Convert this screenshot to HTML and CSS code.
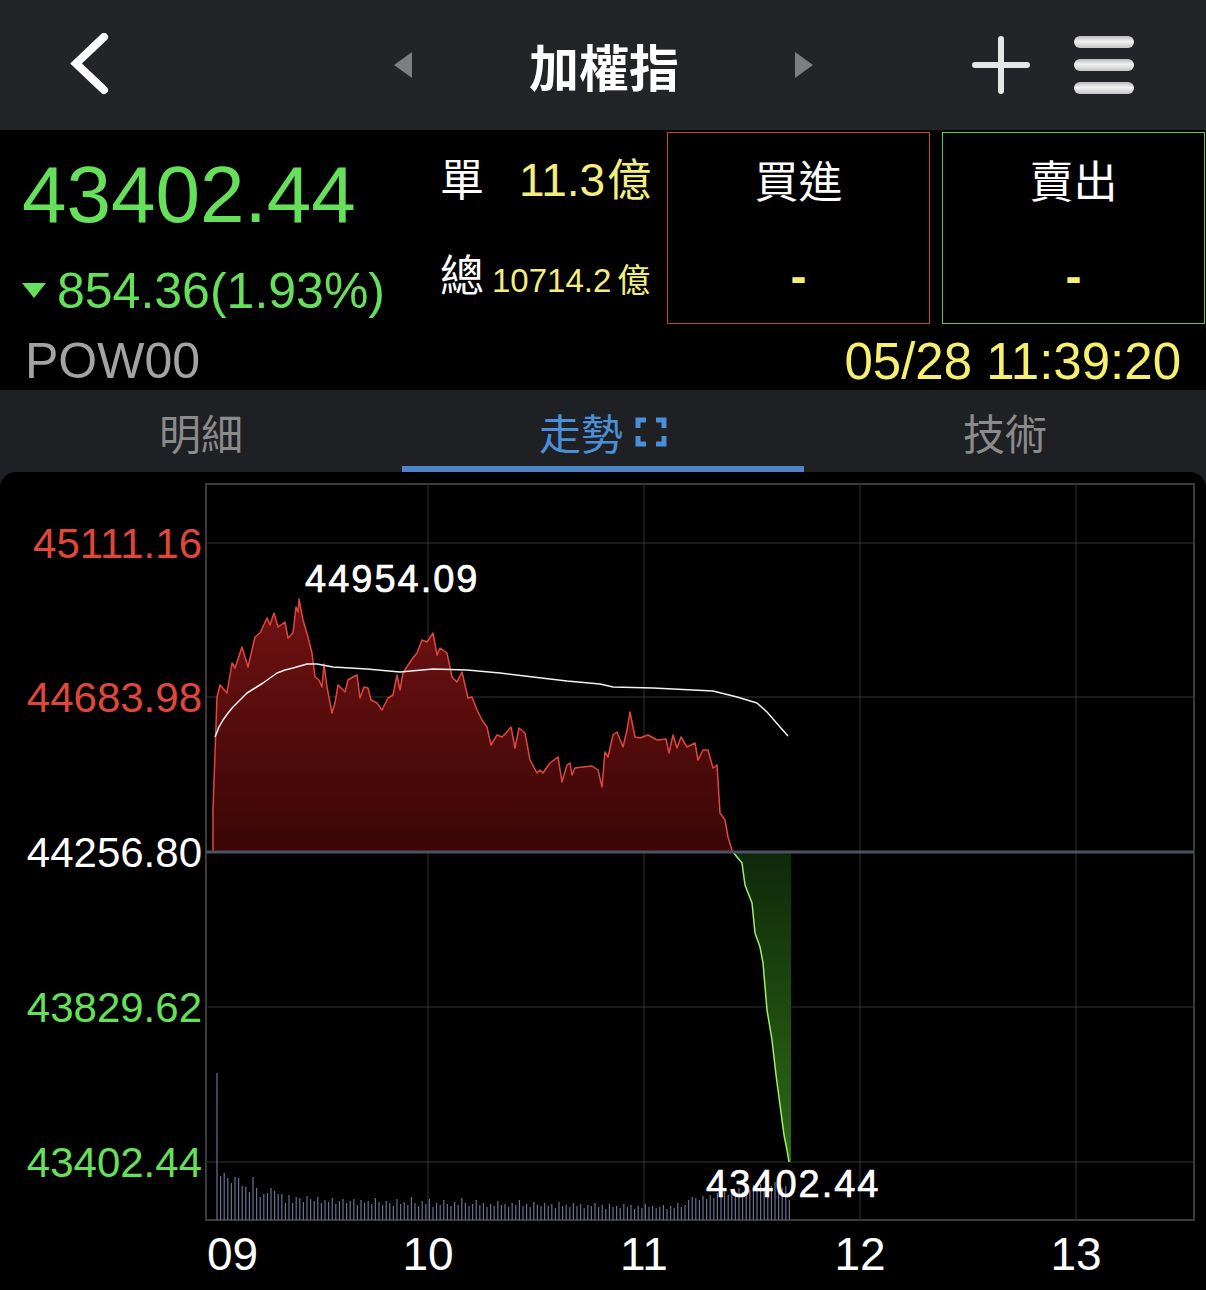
FILE: index.html
```html
<!DOCTYPE html>
<html lang="zh-Hant">
<head>
<meta charset="utf-8">
<title>加權指</title>
<link rel="stylesheet" href="styles.css">
</head>
<body>
<div class="app">
  <header class="nav">
    <svg class="nav-back" width="44" height="64" viewBox="0 0 44 64"><path d="M38 4 L10 30.5 L38 57" fill="none" stroke="#fff" stroke-width="8" stroke-linecap="round" stroke-linejoin="miter"/></svg>
    <span class="tri tri-left"></span>
    <h1 class="nav-title">加權指</h1>
    <span class="tri tri-right"></span>
    <svg class="nav-plus" width="58" height="58" viewBox="0 0 58 58"><path d="M29 3 V55 M3 29 H55" stroke="#e6e6e6" stroke-width="6" stroke-linecap="round"/></svg>
    <div class="nav-menu"><span></span><span></span><span></span></div>
  </header>

  <section class="quote">
    <div class="quote-main">
      <div class="price-col">
        <div class="price">43402.44</div>
        <div class="change"><span class="down-tri"></span>854.36(1.93%)</div>
      </div>
      <div class="vol-col">
        <div class="vol-row"><span class="vl">單</span><span class="num">11.3</span><span class="unit">億</span></div>
        <div class="vol-row vol-row2"><span class="vl vl2">總</span><span class="num-sm">10714.2</span><span class="unit-sm">億</span></div>
      </div>
      <div class="box buy"><div class="box-label">買進</div><div class="dash">-</div></div>
      <div class="box sell"><div class="box-label">賣出</div><div class="dash">-</div></div>
    </div>
    <div class="quote-foot"><span class="code">POW00</span><span class="time">05/28 11:39:20</span></div>
  </section>

  <nav class="tabs">
    <div class="tab">明細</div>
    <div class="tab active">走勢<svg class="fs-icon" width="32" height="30" viewBox="0 0 32 30"><path d="M3 11 V3 H11 M21 3 H29 V11 M29 19 V27 H21 M11 27 H3 V19" fill="none" stroke="#4b8fd8" stroke-width="5"/></svg></div>
    <div class="tab">技術</div>
  </nav>

  <section class="chart">
    <svg class="chart-svg" width="1206" height="818" viewBox="0 472 1206 818">
      <defs>
        <linearGradient id="redFill" x1="0" y1="0" x2="0" y2="1">
          <stop offset="0" stop-color="#701212"/>
          <stop offset="1" stop-color="#3a0606"/>
        </linearGradient>
        <linearGradient id="greenFill" x1="0" y1="0" x2="0" y2="1">
          <stop offset="0" stop-color="#0e2809"/>
          <stop offset="1" stop-color="#2f6b17"/>
        </linearGradient>
      </defs>

      <rect class="frame" x="206" y="484" width="988" height="736"/>
      <path class="grid" d="M206 543 H1194 M206 697 H1194 M206 1007 H1194 M206 1162 H1194 M428 484 V1220 M644 484 V1220 M860 484 V1220 M1076 484 V1220"/>

      <g transform="translate(217 0) scale(3.6 1)">
        <path class="vol" d="M0 1073V1220M1 1176V1220M2 1173V1220M3 1178V1220M4 1183V1220M5 1177V1220M6 1178V1220M7 1186V1220M8 1187V1220M9 1192V1220M10 1177V1220M11 1188V1220M12 1197V1220M13 1194V1220M14 1193V1220M15 1188V1220M16 1191V1220M17 1194V1220M18 1194V1220M19 1203V1220M20 1195V1220M21 1203V1220M22 1197V1220M23 1198V1220M24 1202V1220M25 1196V1220M26 1199V1220M27 1201V1220M28 1197V1220M29 1203V1220M30 1200V1220M31 1202V1220M32 1198V1220M33 1204V1220M34 1201V1220M35 1199V1220M36 1203V1220M37 1201V1220M38 1199V1220M39 1205V1220M40 1200V1220M41 1203V1220M42 1201V1220M43 1204V1220M44 1198V1220M45 1202V1220M46 1205V1220M47 1201V1220M48 1203V1220M49 1206V1220M50 1199V1220M51 1204V1220M52 1202V1220M53 1205V1220M54 1197V1220M55 1203V1220M56 1206V1220M57 1201V1220M58 1204V1220M59 1199V1220M60 1207V1220M61 1203V1220M62 1205V1220M63 1200V1220M64 1204V1220M65 1206V1220M66 1202V1220M67 1205V1220M68 1198V1220M69 1203V1220M70 1206V1220M71 1204V1220M72 1200V1220M73 1205V1220M74 1203V1220M75 1207V1220M76 1204V1220M77 1206V1220M78 1201V1220M79 1205V1220M80 1204V1220M81 1207V1220M82 1203V1220M83 1205V1220M84 1200V1220M85 1206V1220M86 1204V1220M87 1207V1220M88 1202V1220M89 1205V1220M90 1206V1220M91 1203V1220M92 1206V1220M93 1204V1220M94 1208V1220M95 1202V1220M96 1206V1220M97 1205V1220M98 1207V1220M99 1203V1220M100 1206V1220M101 1204V1220M102 1208V1220M103 1205V1220M104 1206V1220M105 1203V1220M106 1207V1220M107 1205V1220M108 1209V1220M109 1204V1220M110 1207V1220M111 1206V1220M112 1208V1220M113 1204V1220M114 1207V1220M115 1205V1220M116 1209V1220M117 1206V1220M118 1208V1220M119 1204V1220M120 1207V1220M121 1206V1220M122 1208V1220M123 1207V1220M124 1205V1220M125 1209V1220M126 1206V1220M127 1208V1220M128 1203V1220M129 1207V1220M130 1205V1220M131 1200V1220M132 1197V1220M133 1198V1220M134 1200V1220M135 1196V1220M136 1199V1220M137 1195V1220M138 1198V1220M139 1193V1220M140 1196V1220M141 1192V1220M142 1195V1220M143 1190V1220M144 1194V1220M145 1188V1220M146 1192V1220M147 1186V1220M148 1190V1220M149 1185V1220M150 1188V1220M151 1184V1220M152 1187V1220M153 1183V1220M154 1186V1220M155 1182V1220M156 1185V1220M157 1188V1220M158 1186V1220M159 1200V1220"/>
      </g>

      <path class="red-area" d="M213 852 L213 810 217 697 220 685 227 693 232 663 235 668 242 647 248 667 255 637 260 633 267 618 270 625 274 613 278 627 285 622 288 638 293 633 296 607 298 612 299 599 303 620 308 637 312 653 315 677 319 680 322 687 324 664 327 687 332 713 335 703 338 685 345 692 348 680 353 677 357 675 360 698 364 687 368 688 371 700 377 703 382 710 388 698 393 695 397 675 400 690 403 673 408 665 413 658 417 653 422 640 427 642 433 633 437 655 440 648 447 653 452 677 457 682 462 672 468 698 472 697 477 710 482 720 487 727 491 745 497 735 502 737 506 733 511 727 515 748 519 728 525 733 530 760 537 773 540 770 543 773 550 763 558 757 562 782 567 765 570 763 572 775 575 768 583 767 592 766 598 770 602 787 605 752 608 757 613 735 617 732 623 747 627 730 630 712 635 737 640 738 648 735 657 740 666 739 669 753 673 735 677 748 681 737 687 747 695 743 698 760 703 750 708 750 713 768 717 765 720 813 725 820 728 837 732 850 733 852 Z"/>
      <path class="red-line" d="M213 852 L213 810 217 697 220 685 227 693 232 663 235 668 242 647 248 667 255 637 260 633 267 618 270 625 274 613 278 627 285 622 288 638 293 633 296 607 298 612 299 599 303 620 308 637 312 653 315 677 319 680 322 687 324 664 327 687 332 713 335 703 338 685 345 692 348 680 353 677 357 675 360 698 364 687 368 688 371 700 377 703 382 710 388 698 393 695 397 675 400 690 403 673 408 665 413 658 417 653 422 640 427 642 433 633 437 655 440 648 447 653 452 677 457 682 462 672 468 698 472 697 477 710 482 720 487 727 491 745 497 735 502 737 506 733 511 727 515 748 519 728 525 733 530 760 537 773 540 770 543 773 550 763 558 757 562 782 567 765 570 763 572 775 575 768 583 767 592 766 598 770 602 787 605 752 608 757 613 735 617 732 623 747 627 730 630 712 635 737 640 738 648 735 657 740 666 739 669 753 673 735 677 748 681 737 687 747 695 743 698 760 703 750 708 750 713 768 717 765 720 813 725 820 728 837 732 850 733 852"/>

      <path class="green-area" d="M733 852 L737 857 742 863 745 885 752 903 755 933 760 947 763 963 767 1010 772 1040 776 1075 780 1105 784 1135 787 1150 789 1162 791 1162 791 852 Z"/>
      <path class="green-line" d="M733 852 L737 857 742 863 745 885 752 903 755 933 760 947 763 963 767 1010 772 1040 776 1075 780 1105 784 1135 787 1150 789 1162"/>

      <path class="base" d="M206 852 H1194"/>

      <path class="avg" d="M215 737 L219 727 223 720 228 713 233 707 240 700 247 693 255 688 263 683 270 678 277 673 285 670 293 668 300 666 307 664 317 664 333 667 367 669 400 672 433 669 467 670 500 673 533 677 567 681 600 684 613 687 653 688 713 691 737 697 757 703 767 712 780 727 788 736"/>

      <text class="ylab up" x="202" y="558">45111.16</text>
      <text class="ylab up" x="202" y="712">44683.98</text>
      <text class="ylab flat" x="202" y="867">44256.80</text>
      <text class="ylab down" x="202" y="1022">43829.62</text>
      <text class="ylab down" x="202" y="1177">43402.44</text>

      <text class="mark" x="305" y="592">44954.09</text>
      <text class="mark" x="706" y="1197">43402.44</text>

      <text class="xlab" x="207" y="1270">09</text>
      <text class="xlab mid" x="428" y="1270">10</text>
      <text class="xlab mid" x="644" y="1270">11</text>
      <text class="xlab mid" x="860" y="1270">12</text>
      <text class="xlab mid" x="1076" y="1270">13</text>
    </svg>
  </section>
</div>
</body>
</html>
```

FILE: styles.css
```css
* { box-sizing: border-box; margin: 0; padding: 0; }

html, body {
  margin: 0;
  background: #1e1f22;
  font-family: "Liberation Sans", "Noto Sans CJK TC", sans-serif;
}

.app {
  width: 1206px;
  height: 1290px;
  overflow: hidden;
}

/* ---------- nav ---------- */
.nav {
  height: 130px;
  background: #232427;
  display: flex;
  align-items: center;
}
.nav-back { display: block; margin-left: 66px; }
.tri {
  width: 0;
  height: 0;
  border-top: 13.5px solid transparent;
  border-bottom: 13.5px solid transparent;
}
.tri-left { margin-left: 284px; border-right: 18px solid #7b7f82; }
.tri-right { margin-left: 116px; border-left: 18px solid #7b7f82; }
.nav-title {
  margin-left: 117px;
  width: 150px;
  font-family: "Noto Sans CJK TC", sans-serif;
  font-weight: 700;
  font-size: 50px;
  line-height: 50px;
  color: #fff;
  white-space: nowrap;
}
.nav-plus { display: block; margin-left: 159px; }
.nav-menu {
  margin-left: 44px;
  display: flex;
  flex-direction: column;
  gap: 11px;
}
.nav-menu span {
  display: block;
  width: 60px;
  height: 12px;
  border-radius: 6px;
  background: linear-gradient(#b9b9b9, #f2f2f2 45%, #c4c4c4);
}

/* ---------- quote ---------- */
.quote { background: #000; height: 260px; }
.quote-main { display: flex; height: 194px; }
.price-col { width: 440px; padding-left: 22px; }
.price {
  margin-top: 25px;
  font-size: 80px;
  line-height: 80px;
  color: #66e05a;
}
.change {
  margin-top: 31px;
  display: flex;
  align-items: center;
  font-size: 50px;
  line-height: 50px;
  color: #66e05a;
}
.down-tri {
  width: 0;
  height: 0;
  border-left: 12px solid transparent;
  border-right: 12px solid transparent;
  border-top: 15px solid #66e05a;
  margin-right: 11px;
  margin-top: -2px;
}
.vol-col { width: 227px; padding-top: 25px; }
.vol-row {
  display: flex;
  align-items: baseline;
  height: 44px;
  line-height: 44px;
  white-space: nowrap;
}
.vol-row2 { margin-top: 52px; }
.vl {
  font-family: "Noto Sans CJK TC", sans-serif;
  font-size: 44px;
  color: #fff;
  margin-right: 35px;
}
.vl2 { margin-right: 8px; }
.num { font-size: 46px; color: #f4ef7c; }
.unit {
  font-family: "Noto Sans CJK TC", sans-serif;
  font-size: 44px;
  color: #f4ef7c;
  margin-left: 2px;
}
.num-sm { font-size: 33px; color: #f4ef7c; }
.unit-sm {
  font-family: "Noto Sans CJK TC", sans-serif;
  font-size: 33px;
  color: #f4ef7c;
  margin-left: 6px;
}
.box {
  width: 263px;
  height: 192px;
  margin-top: 2px;
  display: flex;
  flex-direction: column;
  align-items: center;
}
.buy { border: 1px solid #c9413a; }
.sell { border: 1px solid #5fc553; margin-left: 12px; }
.box-label {
  margin-top: 24px;
  font-family: "Noto Sans CJK TC", sans-serif;
  font-size: 44px;
  line-height: 44px;
  color: #fff;
}
.dash {
  margin-top: 52px;
  font-size: 48px;
  line-height: 48px;
  font-weight: 700;
  color: #f4ef7c;
}
.quote-foot {
  display: flex;
  justify-content: space-between;
  height: 66px;
  padding: 9px 25px 0 25px;
  font-size: 50px;
  line-height: 57px;
}
.code { color: #a3a3a3; }
.time { color: #f7f06c; font-size: 51px; }

/* ---------- tabs ---------- */
.tabs { display: flex; height: 82px; background: #1f2023; }
.tab {
  flex: 1;
  display: flex;
  align-items: center;
  justify-content: center;
  padding-top: 8px;
  border-bottom: 6px solid transparent;
  font-family: "Noto Sans CJK TC", sans-serif;
  font-size: 42px;
  line-height: 42px;
  color: #8b8b8b;
}
.tab.active { color: #4b8fd8; border-bottom-color: #4b86c9; }
.fs-icon { display: block; margin-left: 12px; }

/* ---------- chart ---------- */
.chart {
  height: 818px;
  background: #000;
  border-radius: 16px 16px 0 0;
  overflow: hidden;
}
.chart-svg { display: block; }
.frame { fill: none; stroke: #3a3a3a; stroke-width: 2; }
.grid { fill: none; stroke: #343434; stroke-width: 1; }
.base { stroke: #4b5262; stroke-width: 3; }
.vol { stroke: #6b7192; stroke-width: 1.2; vector-effect: non-scaling-stroke; fill: none; }
.red-area { fill: url(#redFill); }
.red-line { fill: none; stroke: #e0463e; stroke-width: 1.5; stroke-linejoin: round; }
.green-area { fill: url(#greenFill); }
.green-line { fill: none; stroke: #9ef06a; stroke-width: 1.5; stroke-linejoin: round; }
.avg { fill: none; stroke: #f2f2f2; stroke-width: 1.5; stroke-linejoin: round; }
.ylab {
  font-family: "Liberation Sans", sans-serif;
  font-size: 42px;
  text-anchor: end;
}
.ylab.up { fill: #e0473b; }
.ylab.flat { fill: #ffffff; }
.ylab.down { fill: #66e05a; }
.mark {
  font-family: "Liberation Sans", sans-serif;
  font-size: 38px;
  letter-spacing: 2px;
  fill: #fff;
  stroke: #fff;
  stroke-width: 0.7;
}
.xlab {
  font-family: "Liberation Sans", sans-serif;
  font-size: 46px;
  fill: #fff;
}
.xlab.mid { text-anchor: middle; }
```
